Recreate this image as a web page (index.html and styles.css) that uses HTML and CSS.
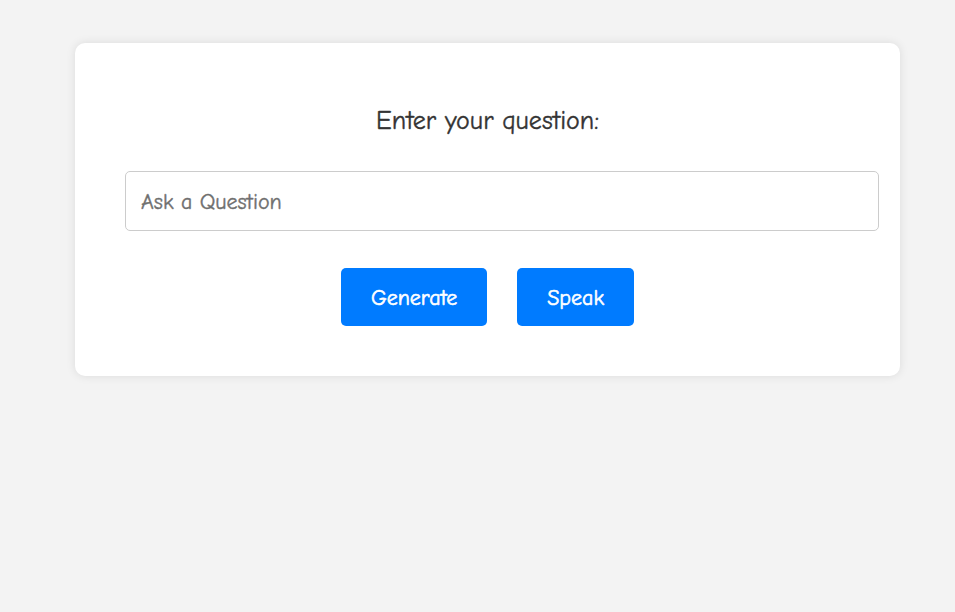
FILE: index.html
```html
<!DOCTYPE html>
<html lang="en">
<head>
<meta charset="utf-8">
<title>Ask a Question</title>
<link rel="stylesheet" href="styles.css">
</head>
<body>
<main class="card">
  <h2 class="title">Enter your question:</h2>
  <input class="question" type="text" placeholder="Ask a Question">
  <div class="actions">
    <button class="btn" type="button">Generate</button>
    <button class="btn" type="button">Speak</button>
  </div>
</main>
</body>
</html>
```
FILE: styles.css
```css
html, body {
  margin: 0;
  padding: 0;
  background: #f3f3f3;
  height: 100%;
}
body {
  font-family: "Comic Sans MS", "Comic Neue", cursive;
  color: #333;
  padding: 43px 0 0 75px;
  box-sizing: border-box;
  -webkit-text-stroke: 0.4px currentColor;
}
.card {
  width: 725px;
  padding: 50px;
  background: #fff;
  border-radius: 10px;
  box-shadow: 0 0 10px rgba(0,0,0,0.1);
  text-align: center;
}
.title {
  margin: 13px 0 35px;
  font-size: 26px;
  line-height: 30px;
  font-weight: normal;
  color: #333;
}
.question {
  display: block;
  width: 722px;
  box-sizing: content-box;
  height: 30px;
  padding: 15px 15px 13px;
  border: 1px solid #ccc;
  border-radius: 5px;
  font-family: inherit;
  font-size: 22px;
  color: #333;
  margin: 0;
}
.question::placeholder {
  color: #6f6f6f;
}
.actions {
  margin-top: 37px;
  display: flex;
  justify-content: center;
  gap: 30px;
}
.btn {
  height: 58px;
  padding: 2px 30px 0;
  background: #007bff;
  color: #fff;
  border: none;
  border-radius: 5px;
  font-family: inherit;
  font-size: 22px;
  -webkit-text-stroke: 0.6px #fff;
}
```
